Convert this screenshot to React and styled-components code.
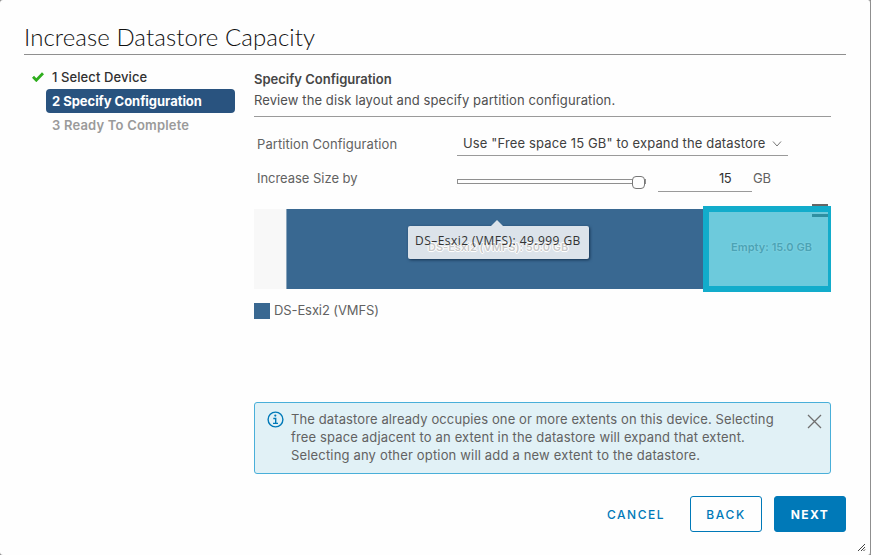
import React from 'react';
import styled, { createGlobalStyle } from 'styled-components';

const GlobalStyle = createGlobalStyle`
  * { box-sizing: border-box; }
  body { margin: 0; background: #8c8c8c; }
`;

const Dialog = styled.div`
  position: relative;
  width: 871px;
  height: 555px;
  padding: 24px 24px 0;
  background: #fefefe;
  border-right: 1px solid #8f8f8f;
  border-radius: 3px;
  overflow: hidden;
  color: #626262;
  font: 400 13px/18px Inter, sans-serif;
  letter-spacing: 0.11px;
  white-space: nowrap;
`;

const Title = styled.h1`
  margin: 0;
  height: 31px;
  width: 822px;
  border-bottom: 1px solid #8f8f8f;
  color: #111;
  font: 300 24px/26px Lato, sans-serif;
  letter-spacing: 0.07px;
`;

const Columns = styled.div`
  display: grid;
  grid-template-columns: 211px 577px;
  column-gap: 19px;
  height: 419px;
`;

const Steps = styled.ol`
  list-style: none;
  margin: 0;
  padding: 10px 0 0;
`;

const Step = styled.li`
  display: grid;
  grid-template-columns: 22px 1fr;
  align-items: center;
  height: 24px;
`;

const StepLabel = styled.span`
  height: 24px;
  padding-left: 6px;
  border-radius: 4px;
  line-height: 24px;
  font-weight: ${(p) => (p.$state === 'done' ? 500 : p.$state === 'active' ? 700 : 600)};
  letter-spacing: ${(p) => (p.$state === 'done' ? '0.09px' : p.$state === 'active' ? '-0.04px' : '0.19px')};
  color: ${(p) => (p.$state === 'done' ? '#303030' : p.$state === 'active' ? '#fff' : '#9a9a9a')};
  background: ${(p) => (p.$state === 'active' ? '#29537f' : 'transparent')};
`;

const CheckIcon = styled.svg`
  margin: 0 0 0 8px;
  width: 12px;
  height: 10px;
`;

const Content = styled.main`
  display: flex;
  flex-direction: column;
  padding-top: 14px;
`;

const Intro = styled.header`
  height: 48px;
  border-bottom: 1px solid #9a9a9a;
`;

const Heading = styled.h2`
  margin: 0;
  height: 22px;
  font: 600 13px/21px Inter, sans-serif;
  letter-spacing: 0;
  color: #454545;
`;

const Lead = styled.p`
  margin: 0;
  line-height: 19px;
  letter-spacing: 0.1px;
  color: #505050;
`;

const Form = styled.div`
  display: grid;
  grid-template-columns: 200px 1fr;
  grid-template-rows: 24px 35px;
  row-gap: 1px;
  padding: 15px 0 0 3px;
  height: 92px;
`;

const Label = styled.label`
  line-height: ${(p) => (p.$low ? '42px' : '24px')};
  letter-spacing: ${(p) => (p.$low ? '-0.04px' : '0.08px')};
`;

const Select = styled.div`
  display: flex;
  justify-content: space-between;
  align-items: center;
  width: 331px;
  height: 24px;
  padding: 0 6px 1px;
  border-bottom: 1px solid #9a9a9a;
  color: #404040;
  letter-spacing: 0.14px;
`;

const Chevron = styled.svg`
  margin-top: 1px;
`;

const SizeRow = styled.div`
  display: flex;
  align-items: flex-end;
  height: 35px;
`;

const Track = styled.div`
  display: flex;
  justify-content: flex-end;
  align-items: center;
  width: 189px;
  height: 5px;
  margin: 0 12px 8px 0;
  border: 1px solid #8f8f8f;
`;

const Thumb = styled.div`
  width: 13px;
  height: 13px;
  flex: none;
  position: relative;
  top: 1px;
  border: 1px solid #777;
  border-radius: 4px;
  background: #fefefe;
`;

const SizeInput = styled.div`
  width: 94px;
  height: 25px;
  padding-right: 21px;
  border-bottom: 1px solid #9a9a9a;
  line-height: 23px;
  text-align: right;
  color: #333;
  letter-spacing: -0.6px;
`;

const Unit = styled.span`
  padding-left: 1px;
  height: 25px;
  line-height: 23px;
  letter-spacing: -0.3px;
`;

const Disk = styled.div`
  position: relative;
  display: flex;
  height: 80px;
`;

const Reserved = styled.div`
  width: 32px;
  background: #f8f8f8;
`;

const Extent = styled.div`
  width: 417px;
  border-left: 1px solid #88a4bc;
  background: #396891;
`;

const FreeSpace = styled.div`
  display: flex;
  align-items: center;
  justify-content: center;
  width: 128px;
  height: 86px;
  margin-top: -3px;
  padding: 0 0 4px 6px;
  border: 6px solid #12accb;
  border-right-width: 3px;
  background: #6dcadc;
  color: #4ba3b5;
  font-size: 11px;
  font-weight: 600;
  line-height: 14px;
  letter-spacing: 0.05px;
  text-shadow: 0 0 2px #98dce8;
`;

const MenuIcon = styled.svg`
  position: absolute;
  left: 558px;
  top: -5px;
`;

const Tooltip = styled.div`
  position: absolute;
  left: 154px;
  top: 17px;
  width: 181px;
  height: 33px;
  padding-left: 7px;
  border-radius: 2px;
  background: #dce3ea;
  box-shadow: 1px 1px 3px rgba(0, 20, 45, 0.65);
  color: #333;
  font: 400 12px/30px "Open Sans", sans-serif;
  letter-spacing: 0.45px;
  &::before {
    content: '';
    position: absolute;
    left: 83px;
    top: -6px;
    border: 6px solid transparent;
    border-top: 0;
    border-bottom-color: #dce3ea;
  }
`;

const ExtentLabel = styled.span`
  position: absolute;
  left: 20px;
  top: 7px;
  color: #c9c9c9;
  font: 600 11px/28px Inter, sans-serif;
  letter-spacing: -0.01px;
  text-shadow: 1px 0 0 #fff, -1px 0 0 #fff, 0 1px 0 #fff, 0 -1px 0 #fff, 0 0 2px #fff;
`;

const TooltipText = styled.span`
  position: relative;
`;

const Legend = styled.div`
  display: flex;
  gap: 4px;
  margin-top: 14px;
  height: 16px;
  line-height: 15px;
  letter-spacing: -0.1px;
`;

const Swatch = styled.span`
  width: 16px;
  height: 16px;
  background: #396891;
`;

const Alert = styled.section`
  display: grid;
  grid-template-columns: 17px 1fr 15px;
  column-gap: 8px;
  height: 72px;
  margin-top: 83px;
  padding: 7px 8px 0 11px;
  border: 1px solid #49afd9;
  border-radius: 3px;
  background: #e1f1f6;
`;

const AlertLine = styled.div`
  letter-spacing: ${(p) => p.$spacing}px;
`;

const AlertIcon = styled.svg`
  margin: 1px 0 0 1px;
`;

const CloseIcon = styled.svg`
  margin-top: 4px;
`;

const Footer = styled.footer`
  display: flex;
  justify-content: flex-end;
  gap: 12px;
  width: 822px;
  padding-top: 22px;
`;

const Button = styled.button`
  width: ${(p) => (p.$kind === 'link' ? 84 : 72)}px;
  height: 36px;
  margin: 0;
  padding: 2px 0 0;
  border: 1px solid ${(p) => (p.$kind === 'link' ? 'transparent' : '#0079b8')};
  border-radius: 3px;
  background: ${(p) => (p.$kind === 'primary' ? '#0079b8' : 'transparent')};
  color: ${(p) => (p.$kind === 'primary' ? '#fff' : '#0079b8')};
  font: ${(p) => (p.$kind === 'primary' ? 700 : 500)} 12px/16px Inter, sans-serif;
  letter-spacing: ${(p) => (p.$kind === 'link' ? 1.5 : p.$kind === 'primary' ? 1.39 : 1.65)}px;
`;

const Grip = styled.svg`
  position: absolute;
  left: 857px;
  top: 543px;
`;

export default function App() {
  return (
    <>
      <GlobalStyle />
      <Dialog>
        <Title>Increase Datastore Capacity</Title>
        <Columns>
          <Steps>
            <Step>
              <CheckIcon viewBox="0 0 12 10">
                <path d="M1 4.8 4.3 8.2 11 1.2" fill="none" stroke="#2fae1e" strokeWidth="2.8" />
              </CheckIcon>
              <StepLabel $state="done">1 Select Device</StepLabel>
            </Step>
            <Step>
              <span />
              <StepLabel $state="active">2 Specify Configuration</StepLabel>
            </Step>
            <Step>
              <span />
              <StepLabel $state="todo">3 Ready To Complete</StepLabel>
            </Step>
          </Steps>
          <Content>
            <Intro>
              <Heading>Specify Configuration</Heading>
              <Lead>Review the disk layout and specify partition configuration.</Lead>
            </Intro>
            <Form>
              <Label>Partition Configuration</Label>
              <Select>
                Use "Free space 15 GB" to expand the datastore
                <Chevron width="10" height="8" viewBox="0 0 10 8">
                  <path d="M1 1.5 5 6 9 1.5" fill="none" stroke="#777" />
                </Chevron>
              </Select>
              <Label $low>Increase Size by</Label>
              <SizeRow>
                <Track>
                  <Thumb />
                </Track>
                <SizeInput>15</SizeInput>
                <Unit>GB</Unit>
              </SizeRow>
            </Form>
            <Disk>
              <Reserved />
              <Extent />
              <FreeSpace>Empty: 15.0 GB</FreeSpace>
              <MenuIcon width="16" height="14" viewBox="0 0 16 14">
                <path d="M0 1h16" stroke="#666" strokeWidth="2" />
                <path d="M0 11.5h16" stroke="#308fa1" strokeWidth="3" />
              </MenuIcon>
              <Tooltip>
                <ExtentLabel>DS-Esxi2 (VMFS): 50.0 GB</ExtentLabel>
                <TooltipText>DS–Esxi2 (VMFS): 49.999 GB</TooltipText>
              </Tooltip>
            </Disk>
            <Legend>
              <Swatch />
              DS-Esxi2 (VMFS)
            </Legend>
            <Alert>
              <AlertIcon width="17" height="17" viewBox="0 0 17 17">
                <circle cx="8.5" cy="8.5" r="7.4" fill="none" stroke="#0079b8" strokeWidth="1.4" />
                <circle cx="8.3" cy="4.6" r="1.1" fill="#0079b8" />
                <path d="M6.3 7.5h2.4v4.8M6 12.4h5" fill="none" stroke="#0079b8" strokeWidth="1.4" />
              </AlertIcon>
              <div>
                <AlertLine $spacing={0.11}>The datastore already occupies one or more extents on this device. Selecting</AlertLine>
                <AlertLine $spacing={0.15}>free space adjacent to an extent in the datastore will expand that extent.</AlertLine>
                <AlertLine $spacing={0.17}>Selecting any other option will add a new extent to the datastore.</AlertLine>
              </div>
              <CloseIcon width="15" height="15" viewBox="0 0 15 15">
                <path d="M1 1 14 14M14 1 1 14" stroke="#707070" strokeWidth="1.3" />
              </CloseIcon>
            </Alert>
          </Content>
        </Columns>
        <Footer>
          <Button $kind="link">CANCEL</Button>
          <Button $kind="outline">BACK</Button>
          <Button $kind="primary">NEXT</Button>
        </Footer>
        <Grip width="9" height="9" viewBox="0 0 9 9">
          <path d="M1 8 8 1M4 8 8 4M6.5 8 8 6.5" stroke="#444" />
        </Grip>
      </Dialog>
    </>
  );
}
